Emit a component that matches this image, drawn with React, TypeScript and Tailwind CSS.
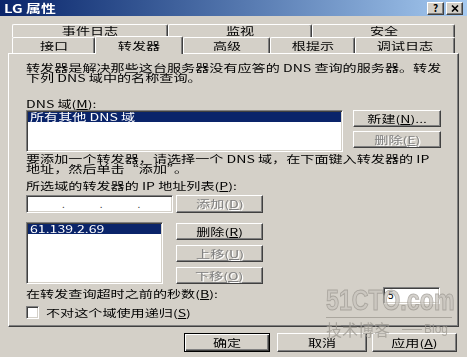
import type { ReactNode } from 'react';

const raised =
  'bg-[#d4d0c8] border border-t-white border-l-white border-b-[#404040] border-r-[#404040] shadow-[inset_-1px_-1px_0_#808080] flex items-center justify-center';
const sunken =
  'bg-white border border-t-[#808080] border-l-[#808080] border-b-white border-r-white shadow-[inset_1px_1px_0_#404040,inset_-1px_-1px_0_#d4d0c8]';
const off = 'text-[#808080] [text-shadow:1px_1px_0_#ffffff]';

// the screenshot is stretched sideways, so text gets a horizontal scale
function L({ children, className = '' }: { children: ReactNode; className?: string }) {
  return <span className={`inline-block whitespace-nowrap origin-left scale-x-[1.41] ${className}`}>{children}</span>;
}

function C({ children, className = '' }: { children: ReactNode; className?: string }) {
  return <span className={`inline-block whitespace-nowrap origin-center scale-x-[1.41] ${className}`}>{children}</span>;
}

function Btn({ w, h, disabled, children }: { w: string; h: string; disabled?: boolean; children: ReactNode }) {
  return (
    <div className={`${raised} ${w} ${h}`}>
      <C className={disabled ? off : ''}>{children}</C>
    </div>
  );
}

function Tab({ w, label, selected }: { w: string; label: string; selected?: boolean }) {
  return (
    <div
      className={`${w} ${
        selected ? 'relative z-10 h-[18px] -mt-[1px]' : 'h-full'
      } bg-[#d4d0c8] border-t border-l border-r border-t-white border-l-white border-r-[#404040] shadow-[inset_-1px_0_0_#808080] rounded-tl-[2px] rounded-tr-[2px] flex items-center justify-center`}
    >
      <C>{label}</C>
    </div>
  );
}

function TitleBtn({ children }: { children: ReactNode }) {
  return <div className={`${raised} w-[17px] h-[13px] font-bold text-[10px] leading-none`}>{children}</div>;
}

export default function App() {
  return (
    <div className="relative w-[467px] h-[357px] overflow-hidden bg-[#d4d0c8] font-['Noto_Sans_CJK_SC',sans-serif] text-[10px] leading-[10px] text-black">
      {/* title bar */}
      <div className="h-[16px] flex items-center justify-between bg-linear-to-r from-[#0a246a] to-[#a6caf0] px-[4px]">
        <span className="inline-block whitespace-nowrap origin-left scale-x-[1.35] text-[11px] leading-[11px] font-bold text-white">
          LG 属性
        </span>
        <div className="flex gap-[2px]">
          <TitleBtn>?</TitleBtn>
          <TitleBtn>
            <svg width="8" height="7" viewBox="0 0 8 7">
              <path d="M1 0.5 L7 6.5 M7 0.5 L1 6.5" stroke="#000" strokeWidth="1.6" />
            </svg>
          </TitleBtn>
        </div>
      </div>

      {/* tabs */}
      <div className="mt-[8px] flex pl-[12px] h-[13px]">
        <Tab w="w-[156px]" label="事件日志" />
        <Tab w="w-[144px]" label="监视" />
        <Tab w="w-[143px]" label="安全" />
      </div>
      <div className="flex items-start pl-[12px] h-[16px]">
        <Tab w="w-[83px]" label="接口" />
        <Tab w="w-[88px]" label="转发器" selected />
        <Tab w="w-[87px]" label="高级" />
        <Tab w="w-[85px]" label="根提示" />
        <Tab w="w-[100px]" label="调试日志" />
      </div>

      {/* tab page */}
      <div className="ml-[8px] w-[451px] h-[274px] border border-t-white border-l-white border-b-[#404040] border-r-[#404040] shadow-[inset_-1px_-1px_0_#808080] px-[17px]">
        <div className="mt-[9px]">
          <div><L>转发器是解决那些这台服务器没有应答的 DNS 查询的服务器。转发</L></div>
          <div><L>下列 DNS 域中的名称查询。</L></div>
        </div>

        <div className="mt-[16px]">
          <L>DNS 域(<span className="underline">M</span>):</L>
        </div>

        <div className="mt-[1px] flex items-start">
          <div className={`${sunken} w-[318px] h-[42px] p-[1px]`}>
            <div className="h-[10px] bg-[#0a246a] text-white pl-[2px]">
              <L>所有其他 DNS 域</L>
            </div>
          </div>
          <div className="ml-[10px] flex flex-col gap-[4px]">
            <Btn w="w-[88px]" h="h-[17px]">
              新建(<span className="underline">N</span>)...
            </Btn>
            <Btn w="w-[88px]" h="h-[17px]" disabled>
              删除(<span className="underline">E</span>)
            </Btn>
          </div>
        </div>

        <div className="mt-[2px]">
          <div><L>要添加一个转发器，请选择一个 DNS 域，在下面键入转发器的 IP</L></div>
          <div><L>地址，然后单击“添加”。</L></div>
        </div>

        <div className="mt-[7px]">
          <L>所选域的转发器的 IP 地址列表(<span className="underline">P</span>):</L>
        </div>

        <div className="mt-[4px] flex items-start">
          <div className={`${sunken} w-[147px] h-[18px] flex items-center pl-[35px] gap-[35px] text-[#404040]`}>
            <span>.</span>
            <span>.</span>
            <span>.</span>
          </div>
          <div className="ml-[3px]">
            <Btn w="w-[87px]" h="h-[18px]" disabled>
              添加(<span className="underline">D</span>)
            </Btn>
          </div>
        </div>

        <div className="mt-[9px] flex items-start">
          <div className={`${sunken} w-[137px] h-[62px] p-[1px]`}>
            <div className="h-[10px] bg-[#0a246a] text-white pl-[2px]">
              <L>61.139.2.69</L>
            </div>
          </div>
          <div className="ml-[13px] mt-[1px] flex flex-col gap-[5px]">
            <Btn w="w-[87px]" h="h-[17px]">
              删除(<span className="underline">R</span>)
            </Btn>
            <Btn w="w-[87px]" h="h-[17px]" disabled>
              上移(<span className="underline">U</span>)
            </Btn>
            <Btn w="w-[87px]" h="h-[17px]" disabled>
              下移(<span className="underline">O</span>)
            </Btn>
          </div>
        </div>

        <div className="mt-[3px] flex items-start justify-between">
          <div className="mt-[2px]">
            <L>在转发查询超时之前的秒数(<span className="underline">B</span>):</L>
          </div>
          <div className={`${sunken} mr-[1px] w-[57px] h-[17px] pl-[4px] pt-[2px]`}>5</div>
        </div>

        <div className="mt-[2px] flex items-center">
          <div className={`${sunken} w-[13px] h-[13px]`} />
          <div className="ml-[7px]">
            <L>不对这个域使用递归(<span className="underline">S</span>)</L>
          </div>
        </div>
      </div>

      {/* dialog buttons */}
      <div className="mt-[6px] flex justify-end pr-[10px]">
        <div className="w-[86px] h-[19px] bg-[#d4d0c8] border border-black shadow-[inset_1px_1px_0_#ffffff,inset_-1px_-1px_0_#404040,inset_-2px_-2px_0_#808080] flex items-center justify-center">
          <C>确定</C>
        </div>
        <div className="ml-[7px]">
          <Btn w="w-[90px]" h="h-[19px]">取消</Btn>
        </div>
        <div className="ml-[5px]">
          <Btn w="w-[85px]" h="h-[19px]">
            应用(<span className="underline">A</span>)
          </Btn>
        </div>
      </div>

      {/* 51cto watermark */}
      <div className="pointer-events-none absolute left-[326px] top-[286px] opacity-75">
        <div className="w-[128px]">
          <span className="inline-block origin-left scale-x-[0.8] font-['Liberation_Sans',sans-serif] font-bold text-[29px] leading-[29px] text-[#c9c5be] [-webkit-text-stroke:1px_#9c9891]">
            51CTO.com
          </span>
        </div>
        <div className="mt-[2px] h-px w-[126px] bg-[#9c9891]" />
        <div className="mt-[3px] flex items-center text-[#9c9891]">
          <span className="inline-block text-[16px] leading-[16px] w-[74px]">技术博客</span>
          <span className="ml-[2px] h-px w-[20px] bg-[#9c9891]" />
          <span className="ml-[2px] font-['Liberation_Sans',sans-serif] text-[12px] leading-[12px]">Blog</span>
        </div>
      </div>
    </div>
  );
}
